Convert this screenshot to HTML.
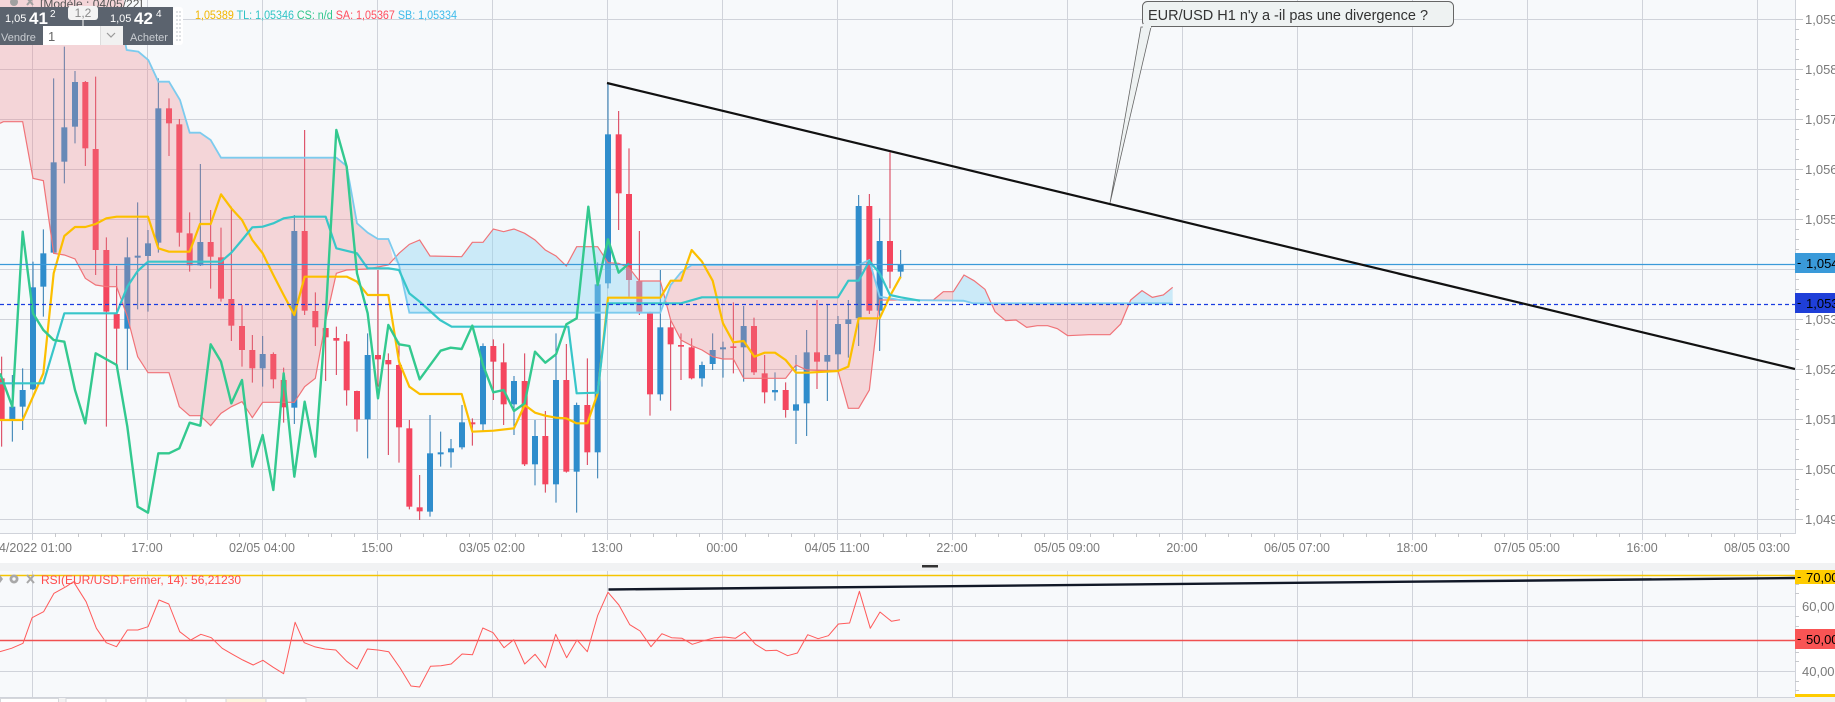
<!DOCTYPE html>
<html><head><meta charset="utf-8">
<style>
html,body{margin:0;padding:0;background:#fff;}
body{width:1835px;height:702px;overflow:hidden;position:relative;font-family:"Liberation Sans",sans-serif;}
svg{position:absolute;left:0;top:0;}
.ns{vector-effect:non-scaling-stroke;fill:none;}
</style></head><body>
<svg width="1835" height="702" viewBox="0 0 1835 702" xmlns="http://www.w3.org/2000/svg" font-family="Liberation Sans, sans-serif">
<defs>
<clipPath id="cm"><rect x="0" y="0" width="1795" height="533"/></clipPath>
<clipPath id="cr"><rect x="0" y="570" width="1795" height="127"/></clipPath>
</defs>
<rect x="0" y="0" width="1795" height="533" fill="#f7f9fb"/>
<rect x="1795" y="0" width="40" height="702" fill="#fff"/>
<rect x="0" y="533" width="1795" height="30" fill="#fff"/>
<rect x="0" y="563" width="1835" height="8" fill="#f1f2f3"/>
<rect x="0" y="571" width="1795" height="126" fill="#f7f9fb"/>
<rect x="0" y="697" width="1835" height="5" fill="#f3f3f3"/>
<g fill="#fff" stroke="#d5d7db" stroke-width="1">
<rect x="0.5" y="698.5" width="58" height="8"/><rect x="66" y="698.5" width="40" height="8"/><rect x="106" y="698.5" width="40" height="8"/><rect x="146" y="698.5" width="40" height="8"/><rect x="186" y="698.5" width="40" height="8"/><rect x="226" y="698.5" width="40" height="8" fill="#fdf6e0"/><rect x="266" y="698.5" width="40" height="8"/>
</g>

<g stroke="#d0d3da" stroke-width="1" fill="none">
<path d="M0 19.5H1795M0 69.5H1795M0 119.5H1795M0 169.5H1795M0 219.5H1795M0 269.5H1795M0 319.5H1795M0 369.5H1795M0 419.5H1795M0 469.5H1795M0 519.5H1795"/>
<path d="M32.5 0V540M147.5 0V540M262.5 0V540M377.5 0V540M492.5 0V540M607.5 0V540M722.5 0V540M837.5 0V540M952.5 0V540M1067.5 0V540M1182.5 0V540M1297.5 0V540M1412.5 0V540M1527.5 0V540M1642.5 0V540M1757.5 0V540"/>
<path d="M32.5 571V697M147.5 571V697M262.5 571V697M377.5 571V697M492.5 571V697M607.5 571V697M722.5 571V697M837.5 571V697M952.5 571V697M1067.5 571V697M1182.5 571V697M1297.5 571V697M1412.5 571V697M1527.5 571V697M1642.5 571V697M1757.5 571V697"/>
<path d="M0 606.5H1795M0 671.5H1795"/>
<path d="M0 533.5H1795.5V0M1795.5 571V697M0 697.5H1795"/>
</g>
<g stroke="#c6c8cc" stroke-width="1" fill="none">
<path d="M1795 29.5h4M1795 39.5h4M1795 49.5h4M1795 59.5h4M1795 79.5h4M1795 89.5h4M1795 99.5h4M1795 109.5h4M1795 129.5h4M1795 139.5h4M1795 149.5h4M1795 159.5h4M1795 179.5h4M1795 189.5h4M1795 199.5h4M1795 209.5h4M1795 229.5h4M1795 239.5h4M1795 249.5h4M1795 259.5h4M1795 279.5h4M1795 289.5h4M1795 299.5h4M1795 309.5h4M1795 329.5h4M1795 339.5h4M1795 349.5h4M1795 359.5h4M1795 379.5h4M1795 389.5h4M1795 399.5h4M1795 409.5h4M1795 429.5h4M1795 439.5h4M1795 449.5h4M1795 459.5h4M1795 479.5h4M1795 489.5h4M1795 499.5h4M1795 509.5h4"/>
<path d="M1795 19.5h8M1795 69.5h8M1795 119.5h8M1795 169.5h8M1795 219.5h8M1795 269.5h8M1795 319.5h8M1795 369.5h8M1795 419.5h8M1795 469.5h8M1795 519.5h8"/>
<path d="M55.5 533v4M78.5 533v4M101.5 533v4M124.5 533v4M170.5 533v4M193.5 533v4M216.5 533v4M239.5 533v4M285.5 533v4M308.5 533v4M331.5 533v4M354.5 533v4M400.5 533v4M423.5 533v4M446.5 533v4M469.5 533v4M515.5 533v4M538.5 533v4M561.5 533v4M584.5 533v4M630.5 533v4M653.5 533v4M676.5 533v4M699.5 533v4M745.5 533v4M768.5 533v4M791.5 533v4M814.5 533v4M860.5 533v4M883.5 533v4M906.5 533v4M929.5 533v4M975.5 533v4M998.5 533v4M1021.5 533v4M1044.5 533v4M1090.5 533v4M1113.5 533v4M1136.5 533v4M1159.5 533v4M1205.5 533v4M1228.5 533v4M1251.5 533v4M1274.5 533v4M1320.5 533v4M1343.5 533v4M1366.5 533v4M1389.5 533v4M1435.5 533v4M1458.5 533v4M1481.5 533v4M1504.5 533v4M1550.5 533v4M1573.5 533v4M1596.5 533v4M1619.5 533v4M1665.5 533v4M1688.5 533v4M1711.5 533v4M1734.5 533v4M1780.5 533v4"/>
<path d="M1795 584.5h4M1795 593.5h4M1795 616.5h4M1795 626.5h4M1795 652.5h4M1795 661.5h4M1795 681.5h4M1795 690.5h4"/>
</g>

<g clip-path="url(#cm)">
<g transform="translate(0,40) scale(0.333333)">
<path class="ns" stroke="#d8364f" stroke-width="1" d="M5 950V1220M256 123V378M287 110V705M319 592V1160M350 678V975M507 175V348M538 237V620M569 517V695M632 510V746M663 563V785M694 500V903M726 795V980M757 885V1028M820 937V1045M851 983V1148M914 270V825M946 757V918M977 805V1023M1009 860V1005M1040 882V1097M1071 1052V1175M1134 690V1040M1165 940V1245M1197 905V1268M1228 1140V1408M1259 1305V1440M1417 1135V1217M1480 898V1080M1511 910V1155M1574 940V1278M1636 1113V1358M1699 912V1298M1762 955V1275M1856 213V570M1887 325V770M1918 573V825M1950 815V1127M2012 840V1112M2043 880V1020M2075 895V1018M2200 787V1000M2262 833V1005M2294 945V1090M2357 1027V1133M2451 780V1047M2608 462V822M2670 337V745"/>
<path class="ns" stroke="#2a78b0" stroke-width="1" d="M37 1005V1205M68 985V1170M99 665V1050M130 568V830M161 115V640M193 20V430M225 93V310M382 592V990M413 487V808M444 570V815M475 115V638M601 372V678M788 888V1040M883 525V1152M1103 880V1255M1290 1125V1430M1322 1175V1280M1353 1197V1283M1386 1095V1228M1449 910V1172M1542 1008V1185M1605 1140V1336M1668 880V1388M1730 1088V1418M1793 667V1315M1824 130V745M1981 690V1082M2106 965V1040M2138 880V990M2169 905V1013M2231 798V1025M2325 997V1082M2388 945V1212M2420 870V1188M2482 795V1083M2514 828V993M2545 780V953M2576 465V918M2639 535V933M2702 630V715"/>
<g fill="#f4455e">
<rect x="-4" y="1015" width="18" height="125"/><rect x="247" y="126" width="18" height="199"/><rect x="278" y="327" width="18" height="303"/><rect x="310" y="630" width="18" height="185"/><rect x="341" y="822" width="18" height="44"/><rect x="498" y="205" width="18" height="45"/><rect x="529" y="253" width="18" height="325"/><rect x="560" y="580" width="18" height="96"/><rect x="623" y="606" width="18" height="44"/><rect x="654" y="652" width="18" height="124"/><rect x="685" y="777" width="18" height="80"/><rect x="717" y="858" width="18" height="72"/><rect x="748" y="930" width="18" height="55"/><rect x="811" y="942" width="18" height="76"/><rect x="842" y="1020" width="18" height="82"/><rect x="905" y="573" width="18" height="239"/><rect x="937" y="813" width="18" height="49"/><rect x="968" y="864" width="18" height="28"/><rect x="1000" y="894" width="18" height="8"/><rect x="1031" y="904" width="18" height="147"/><rect x="1062" y="1053" width="18" height="85"/><rect x="1125" y="945" width="18" height="13"/><rect x="1156" y="960" width="18" height="13"/><rect x="1188" y="975" width="18" height="187"/><rect x="1219" y="1165" width="18" height="235"/><rect x="1250" y="1402" width="18" height="12"/><rect x="1408" y="1147" width="18" height="6"/><rect x="1471" y="918" width="18" height="47"/><rect x="1502" y="967" width="18" height="126"/><rect x="1565" y="1023" width="18" height="250"/><rect x="1627" y="1188" width="18" height="145"/><rect x="1690" y="1020" width="18" height="275"/><rect x="1753" y="1095" width="18" height="142"/><rect x="1847" y="283" width="18" height="177"/><rect x="1878" y="462" width="18" height="258"/><rect x="1909" y="723" width="18" height="92"/><rect x="1941" y="817" width="18" height="246"/><rect x="2003" y="862" width="18" height="51"/><rect x="2034" y="915" width="18" height="5"/><rect x="2066" y="922" width="18" height="93"/><rect x="2191" y="919" width="18" height="5"/><rect x="2253" y="858" width="18" height="139"/><rect x="2285" y="1000" width="18" height="57"/><rect x="2348" y="1050" width="18" height="60"/><rect x="2442" y="937" width="18" height="28"/><rect x="2599" y="498" width="18" height="314"/><rect x="2661" y="603" width="18" height="92"/>
</g>
<g fill="#2f8dcc">
<rect x="28" y="1100" width="18" height="40"/><rect x="59" y="1050" width="18" height="50"/><rect x="90" y="742" width="18" height="306"/><rect x="121" y="640" width="18" height="100"/><rect x="152" y="367" width="18" height="271"/><rect x="184" y="262" width="18" height="103"/><rect x="216" y="126" width="18" height="134"/><rect x="373" y="652" width="18" height="214"/><rect x="404" y="647" width="18" height="6"/><rect x="435" y="610" width="18" height="38"/><rect x="466" y="205" width="18" height="403"/><rect x="592" y="606" width="18" height="70"/><rect x="779" y="942" width="18" height="43"/><rect x="874" y="573" width="18" height="530"/><rect x="1094" y="945" width="18" height="193"/><rect x="1281" y="1240" width="18" height="175"/><rect x="1313" y="1237" width="18" height="6"/><rect x="1344" y="1225" width="18" height="12"/><rect x="1377" y="1147" width="18" height="75"/><rect x="1440" y="918" width="18" height="235"/><rect x="1533" y="1023" width="18" height="70"/><rect x="1596" y="1188" width="18" height="85"/><rect x="1659" y="1020" width="18" height="313"/><rect x="1721" y="1095" width="18" height="200"/><rect x="1784" y="733" width="18" height="504"/><rect x="1815" y="283" width="18" height="447"/><rect x="1972" y="862" width="18" height="201"/><rect x="2097" y="975" width="18" height="40"/><rect x="2129" y="930" width="18" height="42"/><rect x="2160" y="922" width="18" height="6"/><rect x="2222" y="858" width="18" height="64"/><rect x="2316" y="1050" width="18" height="7"/><rect x="2379" y="1093" width="18" height="19"/><rect x="2411" y="937" width="18" height="153"/><rect x="2473" y="945" width="18" height="20"/><rect x="2505" y="852" width="18" height="91"/><rect x="2536" y="838" width="18" height="14"/><rect x="2567" y="498" width="18" height="337"/><rect x="2630" y="603" width="18" height="209"/><rect x="2693" y="672" width="18" height="23"/>
</g>

<g fill="#ee8088" fill-opacity="0.3">
<polygon points="0,-150 370,-150 380,30 415,35 445,60 475,125 507,125 540,180 569,278 600,278 632,300 663,353 1009,353 1040,378 1071,550 1103,578 1134,597 1165,597 1180,660 1165,675 1103,687 1040,690 1009,700 977,843 946,1015 914,1040 883,1087 788,1087 757,1133 726,1085 694,1100 663,1120 632,1157 601,1127 569,1127 538,1100 507,998 444,998 413,950 382,830 350,740 319,740 287,735 256,715 225,657 193,645 161,640 130,422 99,415 68,245 10,245 0,250"/>
<polygon points="1996,780 2012,735 2043,697 2075,675 2576,675 2608,660 2639,775 2608,1050 2576,1105 2545,1105 2514,993 2420,990 2388,975 2357,1015 2231,1015 2200,957 2169,957 2138,950 2106,930 2075,917 2043,900 2012,840"/>
<polygon points="2975,790 2985,815 3017,842 3048,840 3080,862 3112,857 3143,857 3172,866 3203,887 3267,884 3330,884 3362,852 3390,790"/>
<polygon points="2700,782 2800,782 2830,755 2860,755 2860,782"/>
</g>
<g fill="#8fd6f2" fill-opacity="0.42">
<polygon points="1180,660 1197,640 1228,613 1259,600 1290,648 1385,650 1417,607 1449,607 1480,567 1511,575 1542,567 1574,580 1605,600 1636,630 1668,648 1699,678 1730,620 1793,620 1824,668 1856,670 1887,683 1918,723 1981,723 1996,780 1981,818 1228,818 1197,675"/>
<polygon points="2860,755 2892,705 2922,722 2955,748 2975,790 2860,785"/>
<polygon points="3390,790 3392,780 3426,752 3457,772 3490,765 3518,742 3518,790"/>
</g>
<polyline class="ns" stroke="#f07378" stroke-width="1.2" points="0,250 10,245 68,245 99,415 130,422 161,640 193,645 225,657 256,715 287,735 319,740 350,740 382,830 413,950 444,998 507,998 538,1100 569,1127 601,1127 632,1157 663,1120 694,1100 726,1085 757,1133 788,1087 883,1087 914,1040 946,1015 977,843 1009,700 1040,690 1103,687 1165,675 1197,640 1228,613 1259,600 1290,648 1385,650 1417,607 1449,607 1480,567 1511,575 1542,567 1574,580 1605,600 1636,630 1668,648 1699,678 1730,620 1793,620 1824,668 1856,670 1887,683 1918,723 1981,723 2012,840 2043,900 2075,917 2106,930 2138,950 2169,957 2200,957 2231,1015 2357,1015 2388,975 2420,990 2514,993 2545,1105 2576,1105 2608,1050 2639,780 2800,780 2830,755 2860,755 2892,705 2922,722 2955,748 2985,815 3017,842 3048,840 3080,862 3112,857 3143,857 3172,866 3203,887 3267,884 3330,884 3362,852 3392,780 3426,752 3457,772 3490,765 3518,742"/>
<polyline class="ns" stroke="#7ccbee" stroke-width="1.8" points="370,-20 380,30 415,35 445,60 475,125 507,125 540,180 569,278 600,278 632,300 663,353 1009,353 1040,378 1071,550 1103,578 1134,597 1165,597 1197,675 1228,818 1981,818 2012,735 2043,697 2075,675 2576,675 2608,660 2639,770 2700,780 2890,782 2920,790 3518,790"/>

<polyline class="ns" stroke="#fcbf00" stroke-width="2.2" stroke-linejoin="round" points="0,1140 68,1140 130,1000 161,700 193,588 225,561 256,561 287,552 319,535 350,530 444,530 475,625 507,635 569,635 600,552 632,552 663,463 694,505 726,540 757,600 788,640 820,705 851,765 883,825 914,710 1040,710 1071,725 1103,765 1165,765 1197,965 1228,1040 1259,1062 1385,1062 1417,1175 1480,1172 1542,1165 1574,1095 1605,1118 1636,1127 1668,1133 1699,1135 1730,1150 1762,1150 1793,1060 1824,773 1981,773 2012,722 2043,722 2075,630 2106,665 2138,722 2169,850 2200,907 2231,903 2263,950 2294,938 2325,938 2357,960 2388,998 2420,998 2514,993 2545,980 2576,835 2639,835 2670,768 2702,710"/>
<polyline class="ns" stroke="#38c6c9" stroke-width="2.2" stroke-linejoin="round" points="0,1030 130,1030 193,820 350,820 382,740 413,693 444,665 663,665 694,638 726,600 757,562 788,560 820,550 851,535 883,530 977,530 1009,625 1071,640 1103,685 1165,685 1197,690 1228,760 1259,785 1320,840 1355,860 1705,860 1730,1060 1793,1058 1824,790 2043,790 2106,772 2514,772 2545,722 2576,722 2608,663 2639,700 2670,765 2702,772 2760,782"/>
<polyline class="ns" stroke="#33c98f" stroke-width="2.4" stroke-linejoin="round" points="0,1000 37,1100 68,575 99,820 130,870 161,900 193,905 225,1050 256,1150 287,940 350,975 382,1160 413,1400 444,1418 475,1240 507,1240 538,1225 569,1148 601,1157 632,913 663,965 694,1090 726,1020 757,1280 788,1185 820,1350 851,1000 883,1310 914,1085 946,1250 977,830 1009,270 1040,380 1071,700 1103,820 1134,1075 1165,855 1197,913 1228,918 1259,1018 1322,932 1352,923 1385,927 1417,857 1449,975 1480,1057 1511,1050 1542,1113 1574,1090 1605,935 1636,968 1668,943 1699,853 1730,835 1765,500 1793,735 1824,598 1856,698 1887,670"/>
</g>

<path d="M0 264.5H1795" stroke="#3a9ad9" stroke-width="1.2" fill="none"/>
<path d="M0 304.5H1795" stroke="#1a3de0" stroke-width="1.2" stroke-dasharray="4,3" fill="none"/>
<path d="M607 83L1795 369" stroke="#111" stroke-width="2.2" fill="none"/>
<path d="M1141 27L1110 203L1151 27Z" fill="#eef2f2" stroke="#666" stroke-width="0.8"/>
<rect x="1142.5" y="1.5" width="311" height="25" rx="5" fill="#eef2f2" stroke="#666" stroke-width="1"/>
<rect x="1143" y="24" width="8" height="4" fill="#eef2f2"/>
<text x="1148" y="20" font-size="14.5" fill="#333">EUR/USD H1 n'y a -il pas une divergence ?</text>
</g>

<g font-size="13" fill="#7a7a7a">
<text x="1805" y="24">1,0590</text><text x="1805" y="74">1,0580</text><text x="1805" y="124">1,0570</text><text x="1805" y="174">1,0560</text><text x="1805" y="224">1,0550</text><text x="1805" y="324">1,0530</text><text x="1805" y="374">1,0520</text><text x="1805" y="424">1,0510</text><text x="1805" y="474">1,0500</text><text x="1805" y="524">1,0490</text>
</g>
<rect x="1795" y="253" width="40" height="20" fill="#3a9ad9"/>
<rect x="1795" y="293" width="40" height="20" fill="#1f3fd8"/>
<g font-size="13" fill="#000"><text x="1797" y="267">-</text><text x="1806" y="268">1,0541</text><text x="1797" y="307">-</text><text x="1806" y="308">1,0533</text></g>

<g font-size="12.5" fill="#7a7a7a" text-anchor="middle">
<text x="32" y="552">04/2022 01:00</text><text x="147" y="552">17:00</text><text x="262" y="552">02/05 04:00</text><text x="377" y="552">15:00</text><text x="492" y="552">03/05 02:00</text><text x="607" y="552">13:00</text><text x="722" y="552">00:00</text><text x="837" y="552">04/05 11:00</text><text x="952" y="552">22:00</text><text x="1067" y="552">05/05 09:00</text><text x="1182" y="552">20:00</text><text x="1297" y="552">06/05 07:00</text><text x="1412" y="552">18:00</text><text x="1527" y="552">07/05 05:00</text><text x="1642" y="552">16:00</text><text x="1757" y="552">08/05 03:00</text>
</g>
<rect x="922" y="565" width="16" height="2.5" fill="#333"/>

<g clip-path="url(#cr)">
<path d="M0 575.5H1795" stroke="#f5c400" stroke-width="1.5" fill="none"/>
<path d="M0 640.5H1795" stroke="#f05050" stroke-width="1.5" fill="none"/>
<polyline fill="none" stroke="#ff5a5a" stroke-width="1" stroke-linejoin="round" points="0,651.7 11.5,648.3 23,643.3 32.1,617.7 43.6,611.7 54,593.3 66,586.7 73.5,581.7 86.1,601.7 96.4,628.3 106.2,642.7 116.5,646.7 127.4,630 137.8,630 148.1,626.7 159,600 168.8,604 179.7,631.7 190.6,640 200.9,634.3 211.3,637.7 222.2,648.3 232.5,654.3 242.8,660 253.2,665 262.9,660.3 273.3,667.3 283.6,673.7 295.1,622.3 304.2,642.7 314.6,646.7 324.9,649 335.8,650 346.7,661.3 357.1,669 367.4,649 377.8,650 388.7,651.7 400.1,668 411,686 419.6,687 430.5,666.3 440.9,665.7 451.2,664 462.1,654 472.5,654.7 482.8,628 493.1,632.7 504,647.7 513.8,639.7 524.7,664 535.1,654.3 545.4,667.7 555.7,634.3 566.6,657.7 577,640 587.3,651.7 597.6,615.7 608,592.3 618.9,605 629.8,624.7 640.1,631 651,646.7 661.9,633.7 671.6,637.7 682,638.3 692.3,644.3 703.8,640.7 714.7,637.7 724.5,637 735.4,638.3 744.6,632 755.5,644.3 765.8,650.7 776.7,650.3 787.6,655.7 797.4,653 807.7,634.7 818.1,638.7 828.4,635.7 838.4,624 849.6,623 859.4,591.3 870.3,628.3 880,612 891.5,621.3 900,619.7"/>
<path d="M608.5 589.5L1795 578" stroke="#111827" stroke-width="2.4" fill="none"/>
</g>
<text x="41" y="584" font-size="12" fill="#ff4c4c">RSI(EUR/USD.Fermer, 14): 56,21230</text>
<g fill="#a8a8a8"><circle cx="14" cy="579" r="4.5"/><circle cx="14" cy="579" r="1.7" fill="#f7f9fb"/><path d="M0 575l3 4-3 4z"/></g>
<path d="M27 575l7 8M34 575l-7 8" stroke="#a8a8a8" stroke-width="2" fill="none"/>
<rect x="1795" y="570" width="40" height="14" fill="#ffcc00"/>
<rect x="1795" y="629" width="40" height="20" fill="#f95454"/>
<rect x="1795" y="694" width="40" height="3" fill="#ffcc00"/>
<g font-size="13" fill="#000"><text x="1797" y="581">-</text><text x="1806" y="582">70,00</text><text x="1797" y="643">-</text><text x="1806" y="644">50,00</text></g>
<g font-size="13" fill="#7a7a7a"><text x="1802" y="611">60,000</text><text x="1802" y="676">40,000</text></g>

<text x="195" y="19" font-size="11.5" textLength="262" lengthAdjust="spacingAndGlyphs"><tspan fill="#f2b500">1,05389 </tspan><tspan fill="#2fc3c6">TL: 1,05346 </tspan><tspan fill="#2fc58c">CS: n/d </tspan><tspan fill="#ff4d5e">SA: 1,05367 </tspan><tspan fill="#3fbbea">SB: 1,05334</tspan></text>
<text x="40" y="8" font-size="12" fill="#555">[Modèle : 04/05/22]</text>
<g fill="#a0a0a0"><circle cx="14" cy="2" r="4"/></g>
<path d="M27 -2l6 7M33 -2l-6 7" stroke="#a0a0a0" stroke-width="2" fill="none"/>
<rect x="0" y="7" width="173" height="38" fill="#5b636e"/>
<rect x="173" y="7" width="10" height="38" rx="3" fill="#fff"/>
<g fill="#c9cdd2"><circle cx="177" cy="12" r="0.9"/><circle cx="180" cy="12" r="0.9"/><circle cx="177" cy="16" r="0.9"/><circle cx="180" cy="16" r="0.9"/><circle cx="177" cy="20" r="0.9"/><circle cx="180" cy="20" r="0.9"/><circle cx="177" cy="24" r="0.9"/><circle cx="180" cy="24" r="0.9"/><circle cx="177" cy="28" r="0.9"/><circle cx="180" cy="28" r="0.9"/><circle cx="177" cy="32" r="0.9"/><circle cx="180" cy="32" r="0.9"/><circle cx="177" cy="36" r="0.9"/><circle cx="180" cy="36" r="0.9"/><circle cx="177" cy="40" r="0.9"/><circle cx="180" cy="40" r="0.9"/></g>
<rect x="68" y="6" width="30" height="14" rx="3" fill="#f3f3f3"/>
<text x="83" y="17" font-size="12" fill="#888" text-anchor="middle">1,2</text>
<path d="M83 20V26" stroke="#fff" stroke-width="1" fill="none"/>
<g fill="#fff">
<text x="5" y="22" font-size="11">1,05</text><text x="29" y="24" font-size="17" font-weight="bold">41</text><text x="50" y="17" font-size="10">2</text>
<text x="110" y="22" font-size="11">1,05</text><text x="134" y="24" font-size="17" font-weight="bold">42</text><text x="156" y="17" font-size="10">4</text>
</g>
<text x="1" y="41" font-size="11" fill="#c8ccd1">Vendre</text>
<text x="130" y="41" font-size="11" fill="#c8ccd1">Acheter</text>
<rect x="43" y="26" width="80" height="19" fill="#fff"/>
<rect x="100" y="26" width="23" height="19" fill="#f1f1f1"/>
<path d="M100.5 26V45" stroke="#ddd" fill="none"/>
<path d="M107 33l4 4 4-4" fill="none" stroke="#999" stroke-width="1.2"/>
<text x="48" y="41" font-size="13" fill="#666">1</text>
</svg>
</body></html>
